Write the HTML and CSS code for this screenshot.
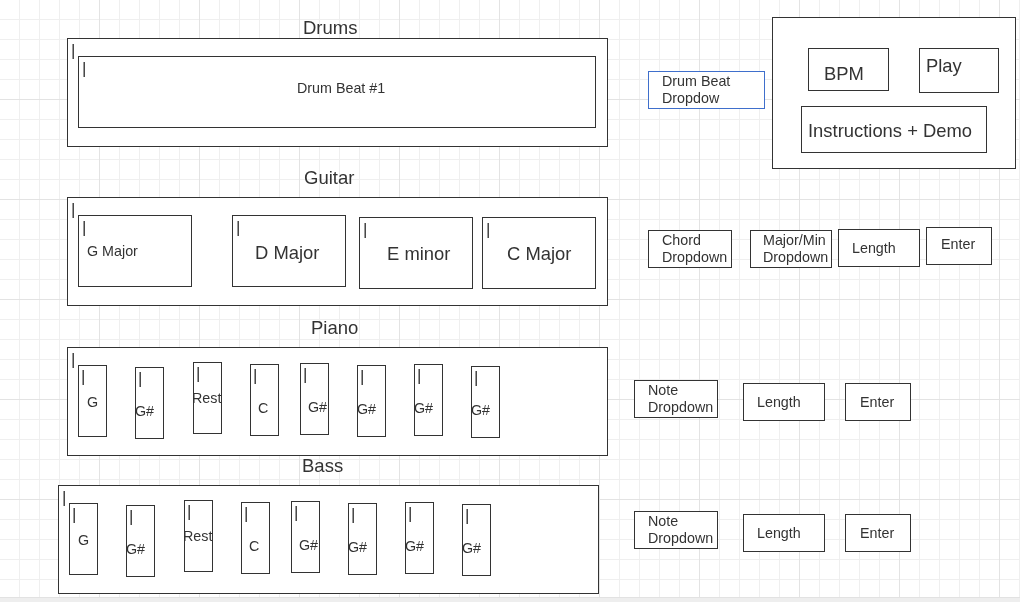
FILE: index.html
```html
<!DOCTYPE html>
<html lang="en">
<head>
    <meta charset="UTF-8">
    <meta name="viewport" content="width=device-width, initial-scale=1.0">
    <title>Music Maker Wireframe</title>
    <link rel="stylesheet" href="styles.css">
</head>
<body>
    <div class="canvas">

        <!-- Drums -->
        <span class="title title-drums">Drums</span>
        <div class="shape frame frame-drums">
            <span class="cur">|</span>
            <div class="shape beat">
                <span class="cur">|</span>
                <span class="txt">Drum Beat #1</span>
            </div>
        </div>

        <div class="shape ctl beat-dd">
            <span class="txt wrap">Drum Beat Dropdow</span>
        </div>

        <div class="shape panel">
            <div class="shape bpm"><span class="txt">BPM</span></div>
            <div class="shape play"><span class="txt">Play</span></div>
            <div class="shape instructions"><span class="txt">Instructions + Demo</span></div>
        </div>

        <!-- Guitar -->
        <span class="title title-guitar">Guitar</span>
        <div class="shape frame frame-guitar">
            <span class="cur">|</span>
            <div class="shape chord chord-g"><span class="cur">|</span><span class="txt">G Major</span></div>
            <div class="shape chord chord-d"><span class="cur">|</span><span class="txt">D Major</span></div>
            <div class="shape chord chord-e"><span class="cur">|</span><span class="txt">E minor</span></div>
            <div class="shape chord chord-c"><span class="cur">|</span><span class="txt">C Major</span></div>
        </div>

        <div class="ctlrow ctlrow-guitar">
            <div class="shape ctl chord-dd"><span class="txt wrap">Chord Dropdown</span></div>
            <div class="shape ctl scale-dd"><span class="txt wrap">Major/Min Dropdown</span></div>
            <div class="shape ctl len"><span class="txt">Length</span></div>
            <div class="shape ctl enter"><span class="txt">Enter</span></div>
        </div>

        <!-- Piano -->
        <span class="title title-piano">Piano</span>
        <div class="shape frame frame-piano">
            <span class="cur">|</span>
            <div class="shape key k1"><span class="cur">|</span><span class="txt">G</span></div>
            <div class="shape key k2"><span class="cur">|</span><span class="txt">G#</span></div>
            <div class="shape key k3"><span class="cur">|</span><span class="txt">Rest</span></div>
            <div class="shape key k4"><span class="cur">|</span><span class="txt">C</span></div>
            <div class="shape key k5"><span class="cur">|</span><span class="txt">G#</span></div>
            <div class="shape key k6"><span class="cur">|</span><span class="txt">G#</span></div>
            <div class="shape key k7"><span class="cur">|</span><span class="txt">G#</span></div>
            <div class="shape key k8"><span class="cur">|</span><span class="txt">G#</span></div>
        </div>

        <div class="ctlrow ctlrow-piano">
            <div class="shape ctl note-dd"><span class="txt wrap">Note Dropdown</span></div>
            <div class="shape ctl len"><span class="txt">Length</span></div>
            <div class="shape ctl enter"><span class="txt">Enter</span></div>
        </div>

        <!-- Bass -->
        <span class="title title-bass">Bass</span>
        <div class="shape frame frame-bass">
            <span class="cur">|</span>
            <div class="shape key k1"><span class="cur">|</span><span class="txt">G</span></div>
            <div class="shape key k2"><span class="cur">|</span><span class="txt">G#</span></div>
            <div class="shape key k3"><span class="cur">|</span><span class="txt">Rest</span></div>
            <div class="shape key k4"><span class="cur">|</span><span class="txt">C</span></div>
            <div class="shape key k5"><span class="cur">|</span><span class="txt">G#</span></div>
            <div class="shape key k6"><span class="cur">|</span><span class="txt">G#</span></div>
            <div class="shape key k7"><span class="cur">|</span><span class="txt">G#</span></div>
            <div class="shape key k8"><span class="cur">|</span><span class="txt">G#</span></div>
        </div>

        <div class="ctlrow ctlrow-bass">
            <div class="shape ctl note-dd"><span class="txt wrap">Note Dropdown</span></div>
            <div class="shape ctl len"><span class="txt">Length</span></div>
            <div class="shape ctl enter"><span class="txt">Enter</span></div>
        </div>

    </div>
    <div class="scrollbar"></div>
</body>
</html>
```

FILE: styles.css
```css
body {
    margin: 0;
    padding: 0;
    font-family: "Liberation Sans", Arial, sans-serif;
    color: #333333;
    background-color: #ffffff;
}

/* drawing canvas with the 20px grid, darker line every 100px */
.canvas {
    position: relative;
    width: 1020px;
    height: 597px;
    overflow: hidden;
    background-color: #ffffff;
    background-image:
        linear-gradient(to right, transparent 99px, #e3e3e3 99px),
        linear-gradient(to bottom, transparent 99px, #e3e3e3 99px),
        linear-gradient(to right, transparent 19px, #efefef 19px),
        linear-gradient(to bottom, transparent 19px, #efefef 19px);
    background-size: 100px 100px, 100px 100px, 20px 20px, 20px 20px;
}

.scrollbar {
    height: 5px;
    background-color: #eeeeee;
    border-top: 1px solid #e2e2e2;
    box-sizing: border-box;
}

.shape {
    position: absolute;
    box-sizing: border-box;
    border: 1px solid #333333;
    background-color: #ffffff;
}

/* grayscale text like the drawing tool renders it */
.txt,
.cur,
.title {
    will-change: transform;
}

.txt {
    position: absolute;
    white-space: nowrap;
    line-height: 1;
}

.cur {
    position: absolute;
    left: 3px;
    top: 3px;
    font-size: 17px;
    line-height: 1;
}

.title {
    position: absolute;
    font-size: 18.5px;
    line-height: 1;
}

.title-drums  { left: 303px; top: 18.5px; }
.title-guitar { left: 304px; top: 168.5px; }
.title-piano  { left: 311px; top: 318.5px; }
.title-bass   { left: 302px; top: 456.5px; }

/* section frames */
.frame {
    width: 541px;
    height: 109px;
}

.frame-drums  { left: 67px; top: 38px; }
.frame-guitar { left: 67px; top: 197px; }
.frame-piano  { left: 67px; top: 347px; }
.frame-bass   { left: 58px; top: 485px; }

.beat {
    left: 10px;
    top: 17px;
    width: 518px;
    height: 72px;
}

.beat .txt {
    left: 217.5px;
    top: 24px;
    font-size: 14.3px;
}

/* small controls */
.ctl {
    height: 38px;
}

.ctl .txt {
    font-size: 14.3px;
    line-height: 17px;
}

.ctl .wrap {
    white-space: normal;
    width: 72px;
}

.beat-dd {
    left: 648px;
    top: 71px;
    width: 117px;
    border-color: #3f6fcc;
}

.beat-dd .txt { left: 12.5px; top: 0.5px; }

.ctlrow {
    position: absolute;
}

.ctlrow-guitar { left: 648px; top: 227px; }
.ctlrow-piano  { left: 634px; top: 380px; }
.ctlrow-bass   { left: 634px; top: 511px; }

.chord-dd { left: 0; top: 3px; width: 84px; }
.scale-dd { left: 102px; top: 3px; width: 82px; }
.chord-dd .txt { left: 12.5px; top: 1px; }
.scale-dd .txt { left: 12.3px; top: 1px; }

.ctlrow-guitar .len   { left: 190px; top: 2px; }
.ctlrow-guitar .enter { left: 278px; top: 0; }
.ctlrow-guitar .len .txt   { top: 10px; }
.ctlrow-guitar .enter .txt { top: 7.7px; }

.note-dd { left: 0; top: 0; width: 84px; }
.note-dd .txt { left: 12.5px; top: 0.7px; }

.len {
    left: 109px;
    top: 3px;
    width: 82px;
}

.len .txt { left: 12.5px; top: 10.4px; }

.enter {
    left: 211px;
    top: 3px;
    width: 66px;
}

.enter .txt { left: 14px; top: 10.4px; }

/* transport panel */
.panel {
    left: 772px;
    top: 17px;
    width: 244px;
    height: 152px;
}

.panel .txt {
    font-size: 18.4px;
}

.bpm {
    left: 35px;
    top: 30px;
    width: 81px;
    height: 43px;
}

.bpm .txt { left: 14.7px; top: 16px; }

.play {
    left: 146px;
    top: 30px;
    width: 80px;
    height: 45px;
}

.play .txt { left: 5.5px; top: 7.6px; }

.instructions {
    left: 28px;
    top: 88px;
    width: 186px;
    height: 47px;
}

.instructions .txt { left: 5.5px; top: 14.6px; }

/* guitar chords */
.chord {
    top: 17px;
    width: 114px;
    height: 72px;
}

.chord .txt {
    font-size: 18.4px;
    top: 27px;
}

.chord-g { left: 10px; }
.chord-d { left: 164px; }
.chord-e { left: 291px; top: 19px; }
.chord-c { left: 414px; top: 19px; }

.chord-g .txt { font-size: 14.3px; left: 7.5px; top: 28px; }
.chord-d .txt { left: 22.4px; top: 28.3px; }
.chord-e .txt { left: 26.5px; }
.chord-c .txt { left: 23.6px; }

/* note keys, same layout for piano and bass */
.key {
    width: 29px;
    height: 72px;
}

.key .cur {
    left: 2px;
    top: 2px;
}

.key .txt {
    font-size: 14.3px;
    left: -1px;
    top: 36px;
}

.k1 { left: 10px;  top: 17px; }
.k2 { left: 67px;  top: 19px; }
.k3 { left: 125px; top: 14px; }
.k4 { left: 182px; top: 16px; }
.k5 { left: 232px; top: 15px; }
.k6 { left: 289px; top: 17px; }
.k7 { left: 346px; top: 16px; }
.k8 { left: 403px; top: 18px; }

.k1 .txt { left: 8px; top: 28.5px; }
.k3 .txt { left: -2px; top: 28px; }
.k4 .txt,
.k5 .txt { left: 7px; }
```
